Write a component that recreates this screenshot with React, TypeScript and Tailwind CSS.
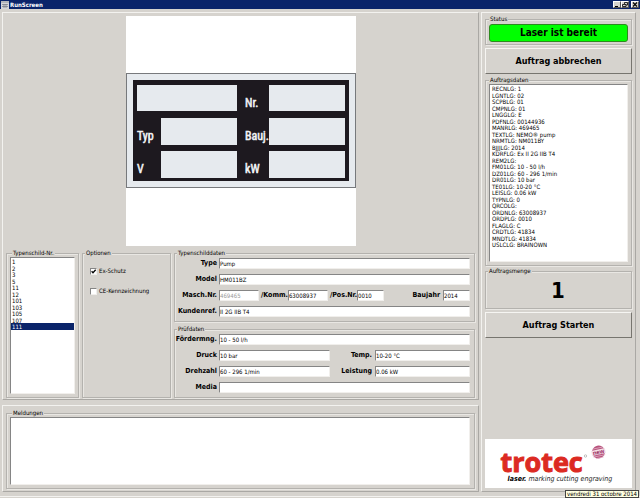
import type { InputHTMLAttributes, ReactNode } from "react";

const typeNumbers = ["1", "2", "3", "5", "11", "12", "101", "103", "105", "107", "111"];

const orderData = [
  "RECNLG: 1",
  "LGNTLG: 02",
  "SCPBLG: 01",
  "CMPNLG: 01",
  "LNGGLG: E",
  "PDFNLG: 00144936",
  "MANRLG: 469465",
  "TEXTLG: NEMO® pump",
  "NRMTLG: NM011BY",
  "BJJJLG: 2014",
  "KDRFLG: Ex II 2G IIB T4",
  "REM2LG:",
  "FM01LG: 10 - 50 l/h",
  "DZ01LG: 60 - 296 1/min",
  "DR01LG: 10 bar",
  "TE01LG: 10-20 °C",
  "LEISLG: 0.06 kW",
  "TYPNLG: 0",
  "QRCOLG:",
  "ORDNLG: 63008937",
  "ORDPLG: 0010",
  "FLAGLG: C",
  "CRDTLG: 41834",
  "MNDTLG: 41834",
  "USLCLG: BRAINOWN",
];

const sunken = "border border-t-[#858585] border-l-[#858585] border-r-[#f1efec] border-b-[#f1efec] bg-white";
const small = "font-['DejaVu_Sans_Condensed','DejaVu_Sans',sans-serif] text-[6px]";

function Panel({ className = "", children }: { className?: string; children: ReactNode }) {
  return (
    <div className={`flex flex-col border border-t-[#f3f2ef] border-r-[#aaa8a4] border-b-[#aaa8a4] border-l-[#f3f2ef] ${className}`}>
      {children}
    </div>
  );
}

function Group({ title, className = "", children }: { title: string; className?: string; children: ReactNode }) {
  return (
    <fieldset className={`min-w-0 border border-[#b4b2ae] pr-px shadow-[inset_1px_1px_0_#e9e7e3,1px_1px_0_#e9e7e3] ${className}`}>
      <legend className={`ml-[2px] h-[7px] bg-[#d6d3ce] px-px leading-[6px] whitespace-nowrap ${small}`}>{title}</legend>
      {children}
    </fieldset>
  );
}

function Label({ id, children }: { id: string; children: ReactNode }) {
  return (
    <label htmlFor={id} className="text-right text-[7px] leading-[11px] font-bold whitespace-nowrap">
      {children}
    </label>
  );
}

function Field({ className = "", ...props }: InputHTMLAttributes<HTMLInputElement>) {
  return (
    <input
      type="text"
      className={`h-[11px] min-w-0 rounded-none leading-[9px] text-black outline-none disabled:text-[#999] ${small} ${sunken} ${className}`}
      {...props}
    />
  );
}

function Row({ id, label, children }: { id: string; label: string; children: ReactNode }) {
  return (
    <div className="grid grid-cols-[42px_1fr] gap-[2px]">
      <Label id={id}>{label}</Label>
      <div className="flex">{children}</div>
    </div>
  );
}

function Check({ label, checked }: { label: string; checked?: boolean }) {
  return (
    <label className={`flex items-center gap-[2px] leading-[8px] whitespace-nowrap ${small}`}>
      <span className="grid">
        <input type="checkbox" defaultChecked={checked} className={`peer col-start-1 row-start-1 size-[7px] appearance-none ${sunken}`} />
        <svg viewBox="0 0 7 7" className="pointer-events-none invisible z-10 col-start-1 row-start-1 size-[7px] peer-checked:visible">
          <path d="M1.6 3.2 3 4.7 5.7 1.8" fill="none" stroke="#000" strokeWidth="1.3" />
        </svg>
      </span>
      {label}
    </label>
  );
}

function BigButton({ children }: { children: ReactNode }) {
  return (
    <button
      type="button"
      className="h-[26px] border border-t-[#f6f5f2] border-r-[#77756f] border-b-[#77756f] border-l-[#f6f5f2] bg-[#d6d3ce] text-[9px] leading-[22px] font-bold"
    >
      {children}
    </button>
  );
}

function Nameplate() {
  return (
    <svg viewBox="0 0 230 230" className="mx-auto size-[230px] bg-white" role="img" aria-label="Typenschild">
      <rect x="0.5" y="57.5" width="229" height="114" fill="#e6eaee" stroke="#77797c" />
      <rect x="7" y="64" width="216" height="101" fill="#1d191f" />
      <g fill="#e6eaee">
        <rect x="11" y="69" width="100" height="26" />
        <rect x="143" y="69" width="76" height="26" />
        <rect x="35" y="102" width="76" height="27" />
        <rect x="143" y="102" width="76" height="27" />
        <rect x="35" y="135" width="76" height="27" />
        <rect x="143" y="135" width="76" height="27" />
      </g>
      <g
        fill="#f2f4f6"
        stroke="#f2f4f6"
        strokeWidth="0.5"
        fontSize="12"
        className="font-['Roboto_Condensed','Open_Sans_Condensed','Liberation_Sans_Narrow',sans-serif]"
      >
        <text x="119" y="91">Nr.</text>
        <text x="11" y="124">Typ</text>
        <text x="119" y="124">Bauj.</text>
        <text x="11" y="157">V</text>
        <text x="119" y="157">kW</text>
      </g>
    </svg>
  );
}

function Logo() {
  return (
    <svg viewBox="0 0 146 49" className="h-[49px] w-full bg-white" role="img" aria-label="trotec laser. marking cutting engraving">
      <text x="15" y="33" fontSize="27" fontWeight="700" fill="#dc2a22" stroke="#dc2a22" strokeWidth="1" className="font-['Open_Sans',sans-serif]">
        trotec
      </text>
      <circle cx="100" cy="17" r="1.2" fill="none" stroke="#888" strokeWidth="0.5" />
      <g transform="rotate(-12 113 13)">
        <circle cx="113" cy="13" r="6.5" fill="#b8527c" />
        <path d="M108 9h10M107 17h12M109 19h8" stroke="#e3b9cb" strokeWidth="0.7" />
        <rect x="106" y="10.5" width="14" height="5" fill="#f3dfe8" />
        <text x="113" y="15" fontSize="6" fontWeight="bold" textAnchor="middle" fill="#9c2f63" className="font-['Liberation_Sans',sans-serif]">
          new
        </text>
      </g>
      <text x="22" y="42" fontSize="7" fontStyle="italic" fill="#222" className="font-['DejaVu_Sans_Condensed','DejaVu_Sans',sans-serif]">
        <tspan fontWeight="bold" fill="#000">laser.</tspan> marking cutting engraving
      </text>
    </svg>
  );
}

function TitleBar() {
  const button = "grid h-[7px] w-[8px] place-items-center border border-t-white border-l-white border-r-[#555] border-b-[#555] bg-[#d6d3ce]";
  return (
    <header className="flex h-[9px] items-center bg-[#0a246a] pr-px pl-px text-white">
      <svg viewBox="0 0 8 8" className="size-[8px]" aria-hidden="true">
        <rect width="8" height="8" fill="#d5d5d8" />
        <path d="M0 1h8M1 3.5h6M1 5.5h6M3 3v4M5 3v4" stroke="#777b86" strokeWidth="0.7" />
      </svg>
      <h1 className="ml-px flex-1 text-[6px] leading-[9px] font-bold">RunScreen</h1>
      <div className="flex">
        <button type="button" aria-label="Minimieren" className={button}>
          <svg viewBox="0 0 6 5" className="h-[5px] w-[6px]"><path d="M1 4.5h3" stroke="#000" /></svg>
        </button>
        <button type="button" aria-label="Wiederherstellen" className={button}>
          <svg viewBox="0 0 6 5" className="h-[5px] w-[6px]"><path d="M2.5 2V.5h3v2.500H4M.5 2.500H4v2H.5z" fill="none" stroke="#000" strokeWidth="0.8" /></svg>
        </button>
        <button type="button" aria-label="Schließen" className={`ml-[2px] ${button}`}>
          <svg viewBox="0 0 6 5" className="h-[5px] w-[6px]"><path d="M1 .5l4 4M5 .5l-4 4" stroke="#000" strokeWidth="1.1" /></svg>
        </button>
      </div>
    </header>
  );
}

export default function App() {
  return (
    <div className="relative flex min-h-screen flex-col bg-[#d6d3ce] font-['DejaVu_Sans_Condensed','DejaVu_Sans',sans-serif] text-black">
      <TitleBar />
      <main className="mb-px flex flex-1 gap-[2px] border-b border-[#f3f2ef] pt-[3px] pr-[4px] pb-[4px] pl-[2px]">
        <div className="flex min-w-0 flex-1 flex-col gap-[5px]">
          <Panel className="gap-[4px] px-[3px] pt-[3px] pb-px">
            <Nameplate />
            <div className="flex gap-[3px]">
              <Group title="Typenschild-Nr." className="flex w-[73px] flex-col pb-[3px] pl-[3px]">
                <select
                  size={11}
                  defaultValue="111"
                  aria-label="Typenschild-Nr."
                  className={`mr-[2px] h-0 flex-1 appearance-none overflow-hidden rounded-none outline-none ${small} ${sunken}`}
                >
                  {typeNumbers.map((n) => (
                    <option
                      key={n}
                      className="min-h-0 p-0 pl-px leading-[6px] checked:bg-linear-to-r checked:from-[#0a246a] checked:to-[#0a246a] checked:[-webkit-text-fill-color:white] odd:h-[7px] even:h-[6px]"
                    >
                      {n}
                    </option>
                  ))}
                </select>
              </Group>
              <Group title="Optionen" className="w-[89px]">
                <div className="flex flex-col gap-[12px] pt-[10px] pl-[7px]">
                  <Check label="Ex-Schutz" checked />
                  <Check label="CE-Kennzeichnung" />
                </div>
              </Group>
              <div className="flex min-w-0 flex-1 flex-col gap-[4px]">
                <Group title="Typenschilddaten">
                  <div className="flex flex-col gap-[5px] pt-px pr-[3px] pb-[4px]">
                    <Row id="type" label="Type"><Field id="type" defaultValue="Pump" className="flex-1" /></Row>
                    <Row id="model" label="Model"><Field id="model" defaultValue="HM011BZ" className="flex-1" /></Row>
                    <Row id="masch" label="Masch.Nr.">
                      <Field id="masch" defaultValue="469465" disabled className="mr-[2px] w-[40px]" />
                      <Label id="komm">/Komm.</Label>
                      <Field id="komm" defaultValue="63008937" className="mr-[2px] w-[40px]" />
                      <Label id="pos">/Pos.Nr.</Label>
                      <Field id="pos" defaultValue="0010" className="mr-auto w-[27px]" />
                      <Label id="baujahr">Baujahr</Label>
                      <Field id="baujahr" defaultValue="2014" className="ml-[3px] w-[27px]" />
                    </Row>
                    <Row id="kunde" label="Kundenref."><Field id="kunde" defaultValue="II 2G IIB T4" className="flex-1" /></Row>
                  </div>
                </Group>
                <Group title="Prüfdaten">
                  <div className="flex flex-col gap-[5px] pt-px pr-[3px] pb-[4px]">
                    <Row id="menge" label="Fördermng."><Field id="menge" defaultValue="10 - 50 l/h" className="flex-1" /></Row>
                    <Row id="druck" label="Druck">
                      <Field id="druck" defaultValue="10 bar" className="mr-auto w-[111px]" />
                      <Label id="temp">Temp.</Label>
                      <Field id="temp" defaultValue="10-20 °C" className="ml-[3px] w-[95px]" />
                    </Row>
                    <Row id="drehzahl" label="Drehzahl">
                      <Field id="drehzahl" defaultValue="60 - 296 1/min" className="mr-auto w-[111px]" />
                      <Label id="leistung">Leistung</Label>
                      <Field id="leistung" defaultValue="0.06 kW" className="ml-[3px] w-[95px]" />
                    </Row>
                    <Row id="media" label="Media"><Field id="media" className="flex-1" /></Row>
                  </div>
                </Group>
              </div>
            </div>
          </Panel>
          <Panel className="flex-1 px-[3px] pt-[4px] pb-[2px]">
            <Group title="Meldungen" className="flex flex-1 flex-col pb-[3px] pl-[3px]">
              <textarea aria-label="Meldungen" className={`mr-[3px] block flex-1 resize-none rounded-none outline-none ${small} ${sunken}`} />
            </Group>
          </Panel>
        </div>
        <Panel className="w-[155px] shrink-0 px-[3px] py-[3px]">
          <Group title="Status" className="pl-px">
            <p className="mx-[2px] mt-px mb-[2px] h-[18px] rounded-[3px] border border-[#2c8a1e] bg-[#00ff00] text-center text-[10px] leading-[16px] font-bold">
              Laser ist bereit
            </p>
          </Group>
          <div className="my-[3px] flex flex-col"><BigButton>Auftrag abbrechen</BigButton></div>
          <Group title="Auftragsdaten" className="pl-px">
            <ul className={`mx-[2px] mb-[3px] grid h-[178px] content-start pt-px pl-[2px] leading-[6px] ${small} ${sunken}`}>
              {orderData.map((line) => (
                <li key={line} className="odd:h-[7px] even:h-[6px]">{line}</li>
              ))}
            </ul>
          </Group>
          <Group title="Auftragsmenge" className="mt-[2px]">
            <output className="block h-[33px] text-center text-[22px] leading-[32px] font-bold">1</output>
          </Group>
          <div className="mt-[3px] flex flex-col"><BigButton>Auftrag Starten</BigButton></div>
          <div className="mt-auto"><Logo /></div>
        </Panel>
      </main>
      <div role="tooltip" className={`absolute right-px bottom-0 border border-[#444] bg-[#ffffe1] px-px leading-[6px] whitespace-nowrap ${small}`}>
        vendredi 31 octobre 2014
      </div>
    </div>
  );
}
